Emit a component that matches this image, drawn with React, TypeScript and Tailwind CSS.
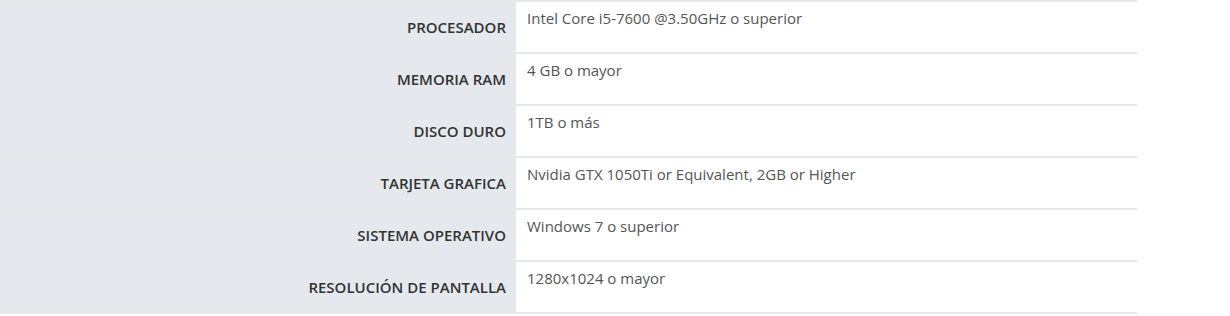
const specs = [
    { label: 'Procesador', value: 'Intel Core i5-7600 @3.50GHz o superior' },
    { label: 'Memoria RAM', value: '4 GB o mayor' },
    { label: 'Disco Duro', value: '1TB o más' },
    { label: 'Tarjeta Grafica', value: 'Nvidia GTX 1050Ti or Equivalent, 2GB or Higher' },
    { label: 'Sistema Operativo', value: 'Windows 7 o superior' },
    { label: 'Resolución de Pantalla', value: '1280x1024 o mayor' },
];

const App = () => {
    return (
        <main className="min-h-screen bg-white font-['Open_Sans',sans-serif]">
            <table className="w-[1137px] border-collapse text-[15px]">
                <tbody>
                    {specs.map((spec) => (
                        <tr key={spec.label} className="h-[52px] border-y-2 border-[#e8e8e8]">
                            <th className="w-[516px] bg-[#e5e9ed] pr-[10px] text-right align-middle font-semibold uppercase text-[#333]">
                                {spec.label}
                            </th>
                            <td className="pl-[11px] pt-[6px] align-top leading-5 text-[#555]">
                                {spec.value}
                            </td>
                        </tr>
                    ))}
                </tbody>
            </table>
        </main>
    );
};

export default App;
